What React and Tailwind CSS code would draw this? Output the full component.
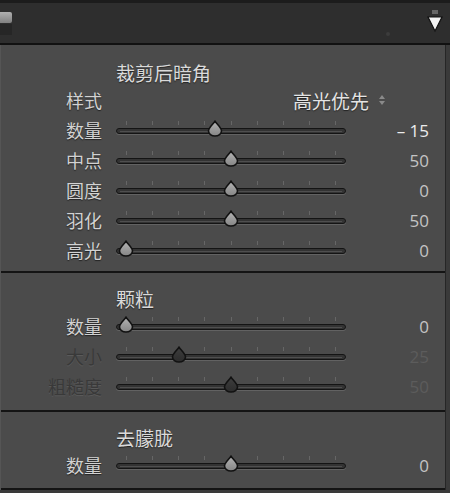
import React from 'react'

const cjk = "font-['Noto_Sans_CJK_SC','Noto_Sans',sans-serif]"
const num = "font-['Open_Sans','Noto_Sans',sans-serif]"

const sections = [
  {
    title: '裁剪后暗角',
    pt: 'pt-[14px]',
    pb: 'pb-[6px]',
    style: true,
    rows: [
      { label: '数量', value: '– 15', pct: 0.425, bright: true },
      { label: '中点', value: '50', pct: 0.5 },
      { label: '圆度', value: '0', pct: 0.5 },
      { label: '羽化', value: '50', pct: 0.5 },
      { label: '高光', value: '0', pct: 0 },
    ],
  },
  {
    title: '颗粒',
    pt: 'pt-[12px]',
    pb: 'pb-[9px]',
    rows: [
      { label: '数量', value: '0', pct: 0 },
      { label: '大小', value: '25', pct: 0.25, dim: true },
      { label: '粗糙度', value: '50', pct: 0.5, dim: true },
    ],
  },
  {
    title: '去朦胧',
    pt: 'pt-[12px]',
    pb: 'pb-[8px]',
    rows: [{ label: '数量', value: '0', pct: 0.5 }],
  },
]

const Thumb = ({ dim }) => (
  <svg width="16" height="17" viewBox="0 0 16 17" className="block">
    <defs>
      <linearGradient id={dim ? 'tdim' : 'tlit'} x1="0" y1="0" x2="0" y2="1">
        <stop offset="0" stopColor={dim ? '#3e3e3e' : '#b4b4b4'} />
        <stop offset="1" stopColor={dim ? '#2c2c2c' : '#858585'} />
      </linearGradient>
    </defs>
    <path
      d="M8 1.2 C10 4.2 14.5 7.5 14.5 11 A6.5 5 0 0 1 1.5 11 C1.5 7.5 6 4.2 8 1.2 Z"
      fill={`url(#${dim ? 'tdim' : 'tlit'})`}
      stroke="#121212"
      strokeWidth="1.6"
    />
  </svg>
)

const Slider = ({ pct, dim }) => (
  <div className="relative h-[30px] w-[230px]">
    {/* ticks */}
    <div className="absolute left-[10px] right-[10px] top-[6px] flex justify-between">
      {Array.from({ length: 9 }).map((_, i) => (
        <span key={i} className="h-[4px] w-px bg-[#666]" />
      ))}
    </div>
    {/* track */}
    <div className="absolute left-0 right-0 top-[13px] h-[6px] rounded-full border border-[#141414] bg-[#333] shadow-[0_1px_0_#626262]">
      <div className="mx-[3px] mt-[2px] h-px bg-[#4f4f4f]" />
    </div>
    <div
      className="absolute top-[5px] -translate-x-1/2"
      style={{ left: `${10 + pct * 210}px` }}
    >
      <Thumb dim={dim} />
    </div>
  </div>
)

const Row = ({ label, value, pct, bright, dim }) => (
  <div className="flex h-[30px] items-center">
    <div
      className={`w-[101px] text-right text-[18px] leading-none ${cjk} ${
        dim ? 'text-[#393939] [text-shadow:0_1px_0_#5a5a5a]' : 'text-[#d2d2d2] [text-shadow:0_1px_1px_#222]'
      }`}
    >
      {label}
    </div>
    <div className="ml-[14px]">
      <Slider pct={pct} dim={dim} />
    </div>
    <div
      className={`w-[83px] text-right text-[17px] leading-none ${num} ${
        bright ? 'font-medium text-[#ececec]' : dim ? 'text-[#5c5c5c]' : 'text-[#c4c4c4]'
      }`}
    >
      {value}
    </div>
  </div>
)

const Section = ({ title, pt, pb, style, rows }) => (
  <div className={`${pt} ${pb} border-b-2 border-[#141414]`}>
    <div className={`flex h-[26px] items-center pl-[115px] text-[19px] leading-none text-[#dadada] [text-shadow:0_1px_1px_#222] ${cjk}`}>
      {title}
    </div>
    {style && (
      <div className="flex h-[30px] items-center">
        <div className={`w-[101px] text-right text-[18px] leading-none text-[#d2d2d2] [text-shadow:0_1px_1px_#222] ${cjk}`}>
          样式
        </div>
        <div className="flex flex-1 items-center justify-end pr-[60px]">
          <span className={`text-[19px] leading-none text-[#e4e4e4] [text-shadow:0_1px_1px_#222] ${cjk}`}>
            高光优先
          </span>
          <span className="ml-[10px] flex flex-col items-center gap-[2px]">
            <span className="h-0 w-0 border-x-[3px] border-b-[4px] border-x-transparent border-b-[#8a8a8a]" />
            <span className="h-0 w-0 border-x-[3px] border-t-[4px] border-x-transparent border-t-[#8a8a8a]" />
          </span>
        </div>
      </div>
    )}
    {rows.map((r) => (
      <Row key={r.label} {...r} />
    ))}
  </div>
)

export default function App() {
  return (
    <div className="h-[493px] w-[450px] overflow-hidden bg-[#3a3a3a]">
      {/* header bar */}
      <div className="relative h-[45px] border-t-[3px] border-b-2 border-t-[#1c1c1c] border-b-[#111] bg-[#2e2e2e]">
        <div className="absolute left-0 top-[9px] h-[11px] w-[12px] rounded-r-[2px] bg-gradient-to-b from-[#b0b0b0] to-[#808080]" />
        <div className="absolute left-0 top-[21px] h-[11px] w-[12px] bg-[#262626]" />
        <span className="absolute left-[386px] top-[29px] h-[4px] w-[4px] rounded-full bg-[#3c3c3c]" />
        <svg className="absolute left-[426px] top-[5px]" width="18" height="26" viewBox="0 0 18 26">
          <path d="M7 2v4M9 2v4M11 2v4" stroke="#bbb" strokeWidth="0.8" />
          <path d="M2 9 L16 9 L9 23 Z" fill="#f2f2f2" stroke="#111" strokeWidth="1.2" />
        </svg>
      </div>
      <div className="w-[446px] border-r border-l border-r-[#262626] border-l-[#555] bg-[#4b4b4b]">
        {sections.map((s) => (
          <Section key={s.title} {...s} />
        ))}
      </div>
    </div>
  )
}
